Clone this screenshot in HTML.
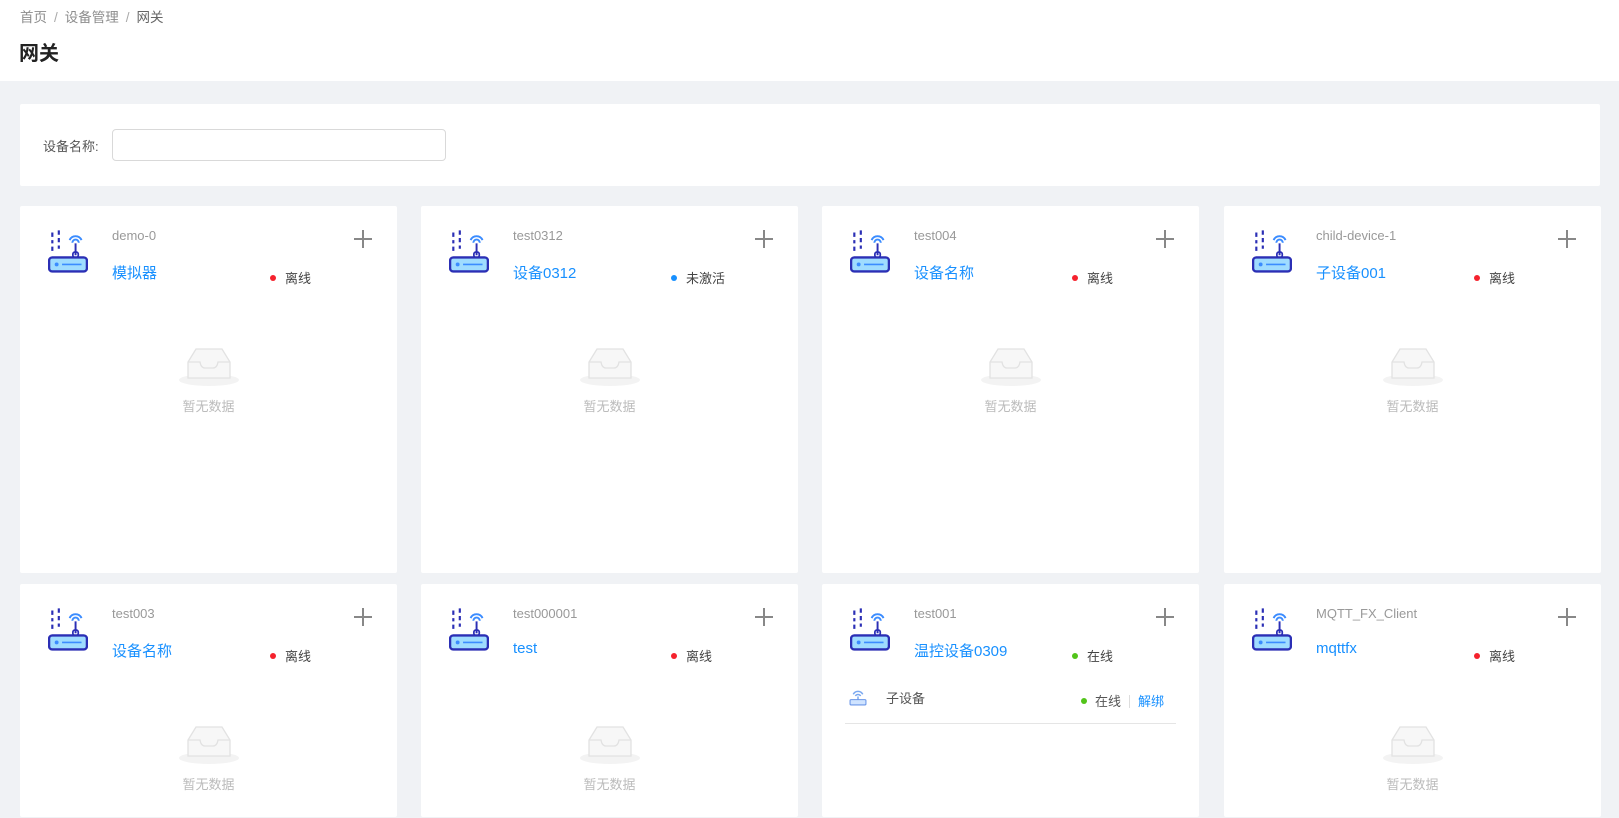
<!DOCTYPE html>
<html><head><meta charset="utf-8">
<style>
*{margin:0;padding:0;box-sizing:border-box}
body{width:1619px;height:818px;overflow:hidden;background:#f0f2f5;font-family:"Liberation Sans","Noto Sans CJK SC",sans-serif;position:relative;color:#333}
.hdr{position:absolute;left:0;top:0;width:1619px;height:81px;background:#fff}
.bc{position:absolute;left:20px;top:6px;font-size:13.5px;color:#8c8c8c}
.bc span{margin:0 7px;color:#aaa}
.bc b{font-weight:normal;color:#666}
.title{position:absolute;left:19px;top:37px;font-size:20px;font-weight:bold;color:#222}
.search{position:absolute;left:20px;top:104px;width:1580px;height:82px;background:#fff;border-radius:2px}
.search label{position:absolute;left:23px;top:32px;font-size:13px;color:#555}
.search .in{position:absolute;left:92px;top:25px;width:334px;height:32px;border:1px solid #d9d9d9;border-radius:4px}
.card{position:absolute;width:377px;background:#fff;border-radius:2px}
.ic{position:absolute;left:28px;top:24px;width:40px;height:44px}
.nm{position:absolute;left:92px;top:22px;font-size:13px;color:#999}
.tt{position:absolute;left:92px;top:56px;font-size:15px;color:#1890ff}
.st{position:absolute;left:250px;top:62px;font-size:13px;color:#444}
.dot{display:inline-block;width:6px;height:6px;border-radius:50%;margin-right:9px;vertical-align:2px}
.plus{position:absolute;left:334px;top:24px;width:18px;height:18px}
.plus:before{content:"";position:absolute;left:8px;top:0;width:1.5px;height:18px;background:#888}
.plus:after{content:"";position:absolute;left:0;top:8px;width:18px;height:1.5px;background:#888}
.emp{position:absolute;left:158px;top:140px;width:62px;height:42px}
.et{position:absolute;left:0;width:377px;text-align:center;top:190px;font-size:13px;color:#bbb}
</style></head><body>
<div class="hdr">
<div class="bc">首页<span>/</span>设备管理<span>/</span><b>网关</b></div>
<div class="title">网关</div>
</div>
<div class="search"><label>设备名称:</label><div class="in"></div></div>

<svg width="0" height="0" style="position:absolute">
<defs>
<g id="rt">
<path d="M4 2v4M4 9v3M4 15v4M10 0v4M10 7v4M10 14v3" stroke="#2b2fb5" stroke-width="2"/>
<path d="M20 9a6 6 0 0 1 11 0M22.5 11.5a3 3 0 0 1 6 0" stroke="#3b8cff" stroke-width="1.8" fill="none"/>
<path d="M25.5 12v11" stroke="#2b2fb5" stroke-width="1.8"/>
<rect x="23" y="20" width="5" height="5" rx="2" fill="none" stroke="#2b2fb5" stroke-width="1.6"/>
<rect x="1" y="25" width="35" height="13" rx="3" fill="#9fdcff" stroke="#2b2fb5" stroke-width="2.2"/>
<circle cx="8" cy="31.5" r="1.8" fill="#3b8cff"/>
<path d="M13 31.5h18" stroke="#3b8cff" stroke-width="1.6"/>
</g>
<g id="em">
<ellipse cx="31" cy="34" rx="30" ry="6" fill="#f3f3f3"/>
<path d="M10 32V16L18 3h26l8 13v16z" fill="#f7f7f7" stroke="#e2e2e2" stroke-width="1.3"/>
<path d="M10 16h12q1 6 5 6h8q4 0 5-6h12" fill="none" stroke="#e2e2e2" stroke-width="1.3"/>
</g>
</defs></svg>

<!-- row 1 -->
<div class="card" style="left:20px;top:206px;height:367px">
<svg class="ic" viewBox="0 0 37 40"><use href="#rt"/></svg><div class="nm">demo-0</div><div class="tt">模拟器</div>
<div class="st"><i class="dot" style="background:#f5222d"></i>离线</div><div class="plus"></div>
<svg class="emp" viewBox="0 0 62 42"><use href="#em"/></svg><div class="et">暂无数据</div></div>
<div class="card" style="left:421px;top:206px;height:367px">
<svg class="ic" viewBox="0 0 37 40"><use href="#rt"/></svg><div class="nm">test0312</div><div class="tt">设备0312</div>
<div class="st"><i class="dot" style="background:#1890ff"></i>未激活</div><div class="plus"></div>
<svg class="emp" viewBox="0 0 62 42"><use href="#em"/></svg><div class="et">暂无数据</div></div>
<div class="card" style="left:822px;top:206px;height:367px">
<svg class="ic" viewBox="0 0 37 40"><use href="#rt"/></svg><div class="nm">test004</div><div class="tt">设备名称</div>
<div class="st"><i class="dot" style="background:#f5222d"></i>离线</div><div class="plus"></div>
<svg class="emp" viewBox="0 0 62 42"><use href="#em"/></svg><div class="et">暂无数据</div></div>
<div class="card" style="left:1224px;top:206px;height:367px">
<svg class="ic" viewBox="0 0 37 40"><use href="#rt"/></svg><div class="nm">child-device-1</div><div class="tt">子设备001</div>
<div class="st"><i class="dot" style="background:#f5222d"></i>离线</div><div class="plus"></div>
<svg class="emp" viewBox="0 0 62 42"><use href="#em"/></svg><div class="et">暂无数据</div></div>

<!-- row 2 -->
<div class="card" style="left:20px;top:584px;height:233px">
<svg class="ic" viewBox="0 0 37 40"><use href="#rt"/></svg><div class="nm">test003</div><div class="tt">设备名称</div>
<div class="st"><i class="dot" style="background:#f5222d"></i>离线</div><div class="plus"></div>
<svg class="emp" viewBox="0 0 62 42"><use href="#em"/></svg><div class="et">暂无数据</div></div>
<div class="card" style="left:421px;top:584px;height:233px">
<svg class="ic" viewBox="0 0 37 40"><use href="#rt"/></svg><div class="nm">test000001</div><div class="tt">test</div>
<div class="st"><i class="dot" style="background:#f5222d"></i>离线</div><div class="plus"></div>
<svg class="emp" viewBox="0 0 62 42"><use href="#em"/></svg><div class="et">暂无数据</div></div>
<div class="card" style="left:822px;top:584px;height:233px">
<svg class="ic" viewBox="0 0 37 40"><use href="#rt"/></svg><div class="nm">test001</div><div class="tt">温控设备0309</div>
<div class="st"><i class="dot" style="background:#52c41a"></i>在线</div><div class="plus"></div>
<svg style="position:absolute;left:27px;top:104px;width:18px;height:18px" viewBox="0 0 17 17"><path d="M4 6a5 5 0 0 1 9 0M6 7.5a3 3 0 0 1 5 0" stroke="#7aa8f0" stroke-width="1.4" fill="none"/><path d="M8.5 8v4" stroke="#7aa8f0" stroke-width="1.4"/><rect x="1" y="11" width="15" height="5" rx="1" fill="#cfe3ff" stroke="#6a96e8"/></svg>
<div style="position:absolute;left:64px;top:104px;font-size:13px;color:#555">子设备</div>
<div style="position:absolute;left:259px;top:107px;font-size:13px;color:#555"><i class="dot" style="background:#52c41a;margin-right:8px"></i>在线<span style="display:inline-block;width:1px;height:13px;background:#ddd;margin:0 8px;vertical-align:-2px"></span><span style="color:#1890ff">解绑</span></div>
<div style="position:absolute;left:23px;top:139px;width:331px;height:1px;background:#e5e5e5"></div>
</div>
<div class="card" style="left:1224px;top:584px;height:233px">
<svg class="ic" viewBox="0 0 37 40"><use href="#rt"/></svg><div class="nm">MQTT_FX_Client</div><div class="tt">mqttfx</div>
<div class="st"><i class="dot" style="background:#f5222d"></i>离线</div><div class="plus"></div>
<svg class="emp" viewBox="0 0 62 42"><use href="#em"/></svg><div class="et">暂无数据</div></div>
</body></html>
